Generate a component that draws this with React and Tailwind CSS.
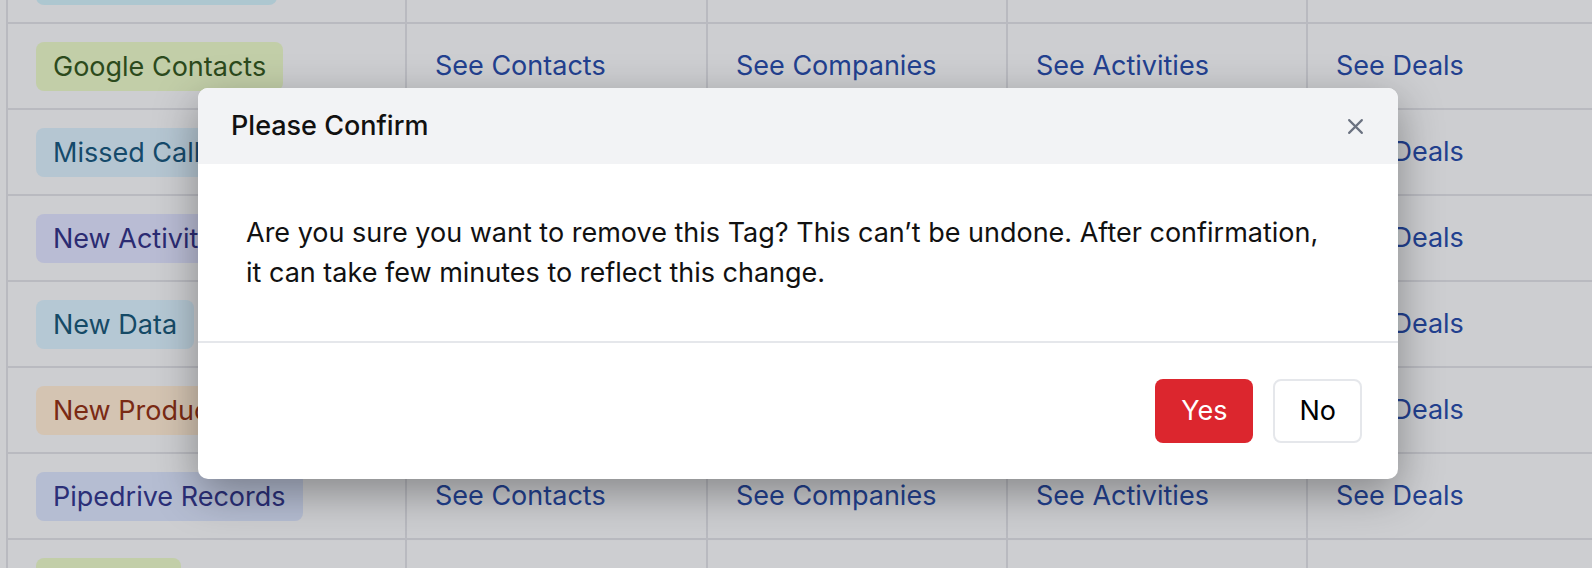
import React from "react";

const rows = [
  { label: "Zoho Records", bg: "bg-[#adc7d0]", fg: "text-[#154a66]", w: "w-[241px]" },
  { label: "Google Contacts", bg: "bg-[#c2cea8]", fg: "text-[#2c4a1c]", w: "" },
  { label: "Missed Calls", bg: "bg-[#b5c6d2]", fg: "text-[#154a6b]", w: "" },
  { label: "New Activity", bg: "bg-[#b9bcd4]", fg: "text-[#2b2b72]", w: "" },
  { label: "New Data", bg: "bg-[#b5c8d4]", fg: "text-[#154a66]", w: "" },
  { label: "New Products", bg: "bg-[#d4c4b2]", fg: "text-[#7a2a14]", w: "" },
  { label: "Pipedrive Records", bg: "bg-[#b5bdd2]", fg: "text-[#2b2f78]", w: "" },
  { label: "Hot Leads", bg: "bg-[#c2cea8]", fg: "text-[#2c4a1c]", w: "w-[145px]" },
];

const links = ["See Contacts", "See Companies", "See Activities", "See Deals"];

function XIcon() {
  return (
    <svg width="17" height="17" viewBox="0 0 16 16" fill="none" stroke="#6b7280" strokeWidth="2" strokeLinecap="round">
      <path d="M2 2L14 14M14 2L2 14" />
    </svg>
  );
}

export default function App() {
  return (
    <div
      className="relative h-[568px] w-[1592px] overflow-hidden bg-[#cdced1] text-[27px]"
      style={{ fontFamily: "Inter, 'Noto Sans', sans-serif" }}
    >
      <div className="ml-[6px] mt-[-62px] border-l-2 border-[#b9bac0]">
        {rows.map((r, i) => (
          <div key={i} className="grid grid-cols-[399px_301px_300px_300px_320px]">
            <div className="flex h-[86px] items-center border-b-2 border-r-2 border-[#b9bac0] pl-7">
              <span
                className={`flex h-[49px] items-center overflow-hidden whitespace-nowrap rounded-lg px-[17px] leading-none ${r.w} ${r.bg} ${r.fg}`}
              >
                {r.label}
              </span>
            </div>
            {links.map((l, j) => (
              <div
                key={j}
                className="flex h-[86px] items-center border-b-2 border-r-2 border-[#b9bac0] pl-7 text-[#22408f]"
              >
                {l}
              </div>
            ))}
          </div>
        ))}
      </div>

      <div className="absolute left-[198px] top-[88px] w-[1200px] rounded-[10px] bg-white shadow-[0_14px_44px_rgba(0,0,0,0.35)]">
        <div className="flex h-[76px] items-center justify-between rounded-t-[10px] bg-[#f2f3f5] pl-[33px] pr-[34px]">
          <span className="font-medium text-[#111111]">Please Confirm</span>
          <XIcon />
        </div>
        <div className="px-12 pb-12 pt-[49px] leading-[40px] text-[#111111]">
          Are you sure you want to remove this Tag? This can’t be undone. After confirmation,
          <br />
          it can take few minutes to reflect this change.
        </div>
        <div className="flex justify-end gap-5 border-t-2 border-[#e5e7eb] px-9 py-9">
          <button className="h-16 rounded-lg bg-[#dc262e] px-[26px] text-white">Yes</button>
          <button className="h-16 rounded-lg border-2 border-[#e5e7eb] bg-white px-6 text-black">No</button>
        </div>
      </div>
    </div>
  );
}
